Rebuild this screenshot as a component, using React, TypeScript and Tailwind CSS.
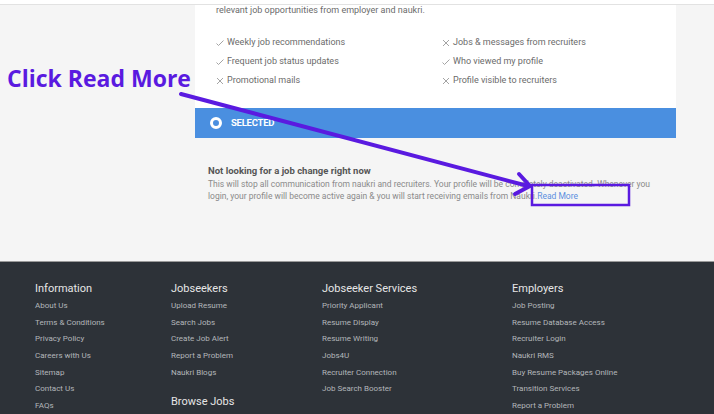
import React from 'react';

const font = { fontFamily: 'Roboto, "Liberation Sans", Arial, sans-serif' };

type Perk = { label: string; ok: boolean };

const leftPerks: Perk[] = [
  { label: 'Weekly job recommendations', ok: true },
  { label: 'Frequent job status updates', ok: true },
  { label: 'Promotional mails', ok: false },
];

const rightPerks: Perk[] = [
  { label: 'Jobs & messages from recruiters', ok: false },
  { label: 'Who viewed my profile', ok: true },
  { label: 'Profile visible to recruiters', ok: false },
];

const footerCols: { title: string; links: string[]; extra?: string }[] = [
  {
    title: 'Information',
    links: ['About Us', 'Terms & Conditions', 'Privacy Policy', 'Careers with Us', 'Sitemap', 'Contact Us', 'FAQs'],
  },
  {
    title: 'Jobseekers',
    links: ['Upload Resume', 'Search Jobs', 'Create Job Alert', 'Report a Problem', 'Naukri Blogs'],
    extra: 'Browse Jobs',
  },
  {
    title: 'Jobseeker Services',
    links: ['Priority Applicant', 'Resume Display', 'Resume Writing', 'Jobs4U', 'Recruiter Connection', 'Job Search Booster'],
    extra: 'Naukri Learning',
  },
  {
    title: 'Employers',
    links: [
      'Job Posting',
      'Resume Database Access',
      'Recruiter Login',
      'Naukri RMS',
      'Buy Resume Packages Online',
      'Transition Services',
      'Report a Problem',
    ],
  },
];

function PerkIcon({ ok }: { ok: boolean }) {
  return ok ? (
    <svg width="8" height="8" viewBox="0 0 8 8" className="shrink-0">
      <polyline points="0.5,4.5 2.5,6.5 7.5,1.5" fill="none" stroke="#9a9a9a" strokeWidth="0.9" />
    </svg>
  ) : (
    <svg width="8" height="8" viewBox="0 0 8 8" className="shrink-0">
      <path d="M1 1 L7 7 M7 1 L1 7" fill="none" stroke="#9a9a9a" strokeWidth="0.9" />
    </svg>
  );
}

function PerkList({ items }: { items: Perk[] }) {
  return (
    <ul className="flex flex-col gap-[8px]">
      {items.map((p) => (
        <li key={p.label} className="flex h-[11px] items-center gap-[3px] text-[9px] text-[#6b6b6b]">
          <PerkIcon ok={p.ok} />
          {p.label}
        </li>
      ))}
    </ul>
  );
}

export default function App() {
  return (
    <div className="relative h-[414px] w-[714px] overflow-hidden bg-[#f5f5f5]" style={font}>
      <div className="h-[5px] border-b border-[#e2e2e2] bg-white" />

      {/* Plan card */}
      <div className="ml-[195px] w-[481px]">
        <div className="bg-white pl-[21px]">
          <p className="text-[9px] leading-[10px] text-[#6b6b6b]">
            relevant job opportunities from employer and naukri.
          </p>
          <div className="mt-[22px] flex pb-[22px]">
            <div className="w-[226px]">
              <PerkList items={leftPerks} />
            </div>
            <PerkList items={rightPerks} />
          </div>
        </div>
        <div className="flex h-[30px] items-center gap-[9px] bg-[#4a8fe0] pl-[15px]">
          <span className="h-[12px] w-[12px] rounded-full border-[3px] border-white" />
          <span className="text-[9.5px] font-bold uppercase tracking-tight text-white">Selected</span>
        </div>
      </div>

      {/* Deactivate option */}
      <div className="ml-[208px] mt-[27px] w-[460px]">
        <h3 className="text-[9.5px] font-bold leading-[12px] text-[#555]">Not looking for a job change right now</h3>
        <p className="mt-[1px] text-[8.5px] leading-[12px] text-[#8a8a8a]">
          This will stop all communication from naukri and recruiters. Your profile will be completely deactivated. Whenever you
          login, your profile will become active again &amp; you will start receiving emails from Naukri.
          <span className="text-[#5b8fdf]">Read More</span>
        </p>
      </div>

      {/* Footer */}
      <footer className="absolute bottom-0 left-0 right-0 top-[261px] border-t border-[#9a9a9a] bg-[#2d3238]">
        <div className="grid grid-cols-[136px_151px_190px_1fr] pl-[35px] pt-[20px]">
          {footerCols.map((col) => (
            <div key={col.title}>
              <h4 className="text-[11px] leading-[13px] text-[#e6e6e6]">{col.title}</h4>
              <ul className="mt-[3px]">
                {col.links.map((l) => (
                  <li key={l} className="h-[16.7px] text-[8px] leading-[16.7px] text-[#b3b6ba]">
                    {l}
                  </li>
                ))}
              </ul>
              {col.extra && <h4 className="mt-[14px] text-[11px] leading-[13px] text-[#e6e6e6]">{col.extra}</h4>}
            </div>
          ))}
        </div>
      </footer>

      {/* Annotation */}
      <div
        className="absolute left-[7px] top-[63px] text-[23px] font-bold leading-[30px] text-[#5a1ae0]"
        style={{ fontFamily: '"Open Sans", "Liberation Sans", sans-serif' }}
      >
        Click Read More
      </div>
      <svg className="pointer-events-none absolute left-0 top-0" width="714" height="414" viewBox="0 0 714 414">
        <line x1="181" y1="94" x2="528" y2="186" stroke="#5a1ae0" strokeWidth="4" strokeLinecap="round" />
        <polyline
          points="519,174 530,186 515,194"
          fill="none"
          stroke="#5a1ae0"
          strokeWidth="4"
          strokeLinecap="round"
          strokeLinejoin="round"
        />
        <rect x="532" y="185" width="97" height="20" fill="none" stroke="#5a1ae0" strokeWidth="2.5" />
      </svg>
    </div>
  );
}
